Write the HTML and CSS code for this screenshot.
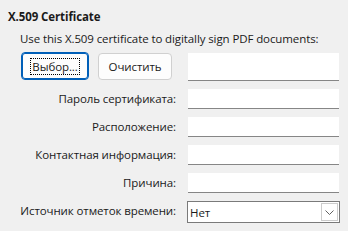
FILE: index.html
```html
<!DOCTYPE html>
<html lang="ru">
<head>
    <meta charset="UTF-8" />
    <title>X.509 Certificate</title>
    <link rel="stylesheet" href="styles.css">
</head>
<body>

<div class="panel">
    <h3 class="title">X.509 Certificate</h3>
    <p class="hint">Use this X.509 certificate to digitally sign PDF documents:</p>

    <div class="form">
        <div class="buttons">
            <button class="btn btn-focus"><span class="focus-ring">Выбор...</span></button>
            <button class="btn btn-clear">Очистить</button>
        </div>
        <div class="field field-tall"></div>

        <label class="lbl">Пароль сертификата:</label>
        <div class="field"></div>

        <label class="lbl">Расположение:</label>
        <div class="field"></div>

        <label class="lbl">Контактная информация:</label>
        <div class="field"></div>

        <label class="lbl">Причина:</label>
        <div class="field"></div>

        <label class="lbl">Источник отметок времени:</label>
        <div class="select">
            <span class="select-text">Нет</span>
            <span class="select-arrow">
                <svg width="9" height="5" viewBox="0 0 9 5"><path d="M0.5 0.5 L4.5 4.5 L8.5 0.5" fill="none" stroke="#606060" stroke-width="1"/></svg>
            </span>
        </div>
    </div>
</div>

</body>
</html>
```

FILE: styles.css
```css
* {
    box-sizing: border-box;
    margin: 0;
    padding: 0;
}

html, body {
    background: #f0f0f0;
    color: #1a1a1a;
    font-family: 'Open Sans', 'Noto Sans', Arial, sans-serif;
    font-size: 11.5px;
    letter-spacing: -0.1px;
}

.panel {
    padding: 9px 8px;
}

.title {
    font-size: 11.5px;
    font-weight: bold;
    line-height: 16px;
}

.hint {
    line-height: 16px;
    margin: 6px 0 0 12px;
}

/* label | field grid */
.form {
    display: grid;
    grid-template-columns: 168px 151px;
    column-gap: 12px;
    row-gap: 8px;
    margin-top: 5px;
}

.buttons {
    display: flex;
    gap: 9px;
    padding-left: 13px;
    height: 28px;
}

.btn {
    font-family: inherit;
    font-size: 11.5px;
    letter-spacing: -0.1px;
    color: #1a1a1a;
    background: #fdfdfd;
    border: 1px solid #d0d0d0;
    border-radius: 4px;
    height: 28px;
}

.btn-focus {
    width: 68px;
    border: 1px solid #005fb8;
    box-shadow: inset 0 0 0 1px #005fb8;
}

.btn-clear {
    width: 74px;
    margin-top: 1px;
    height: 27px;
}

.focus-ring {
    display: inline-block;
    border: 1px dotted #000;
    padding: 0 1px;
    line-height: 15px;
}

.lbl {
    text-align: right;
    line-height: 20px;
}

.field {
    height: 20px;
    background: #fff;
    border-bottom: 1px solid #868686;
}

.field-tall {
    height: 28px;
    margin-top: 1px;
}

.select {
    display: flex;
    align-items: center;
    justify-content: space-between;
    width: 153px;
    height: 22px;
    margin-left: -1px;
    background: #fff;
    border: 1px solid #7a7a7a;
    padding: 0 1px 0 2px;
}

.select-arrow {
    display: flex;
    align-items: center;
    justify-content: center;
    width: 17px;
    height: 18px;
    border: 1px solid #cccccc;
}
```
